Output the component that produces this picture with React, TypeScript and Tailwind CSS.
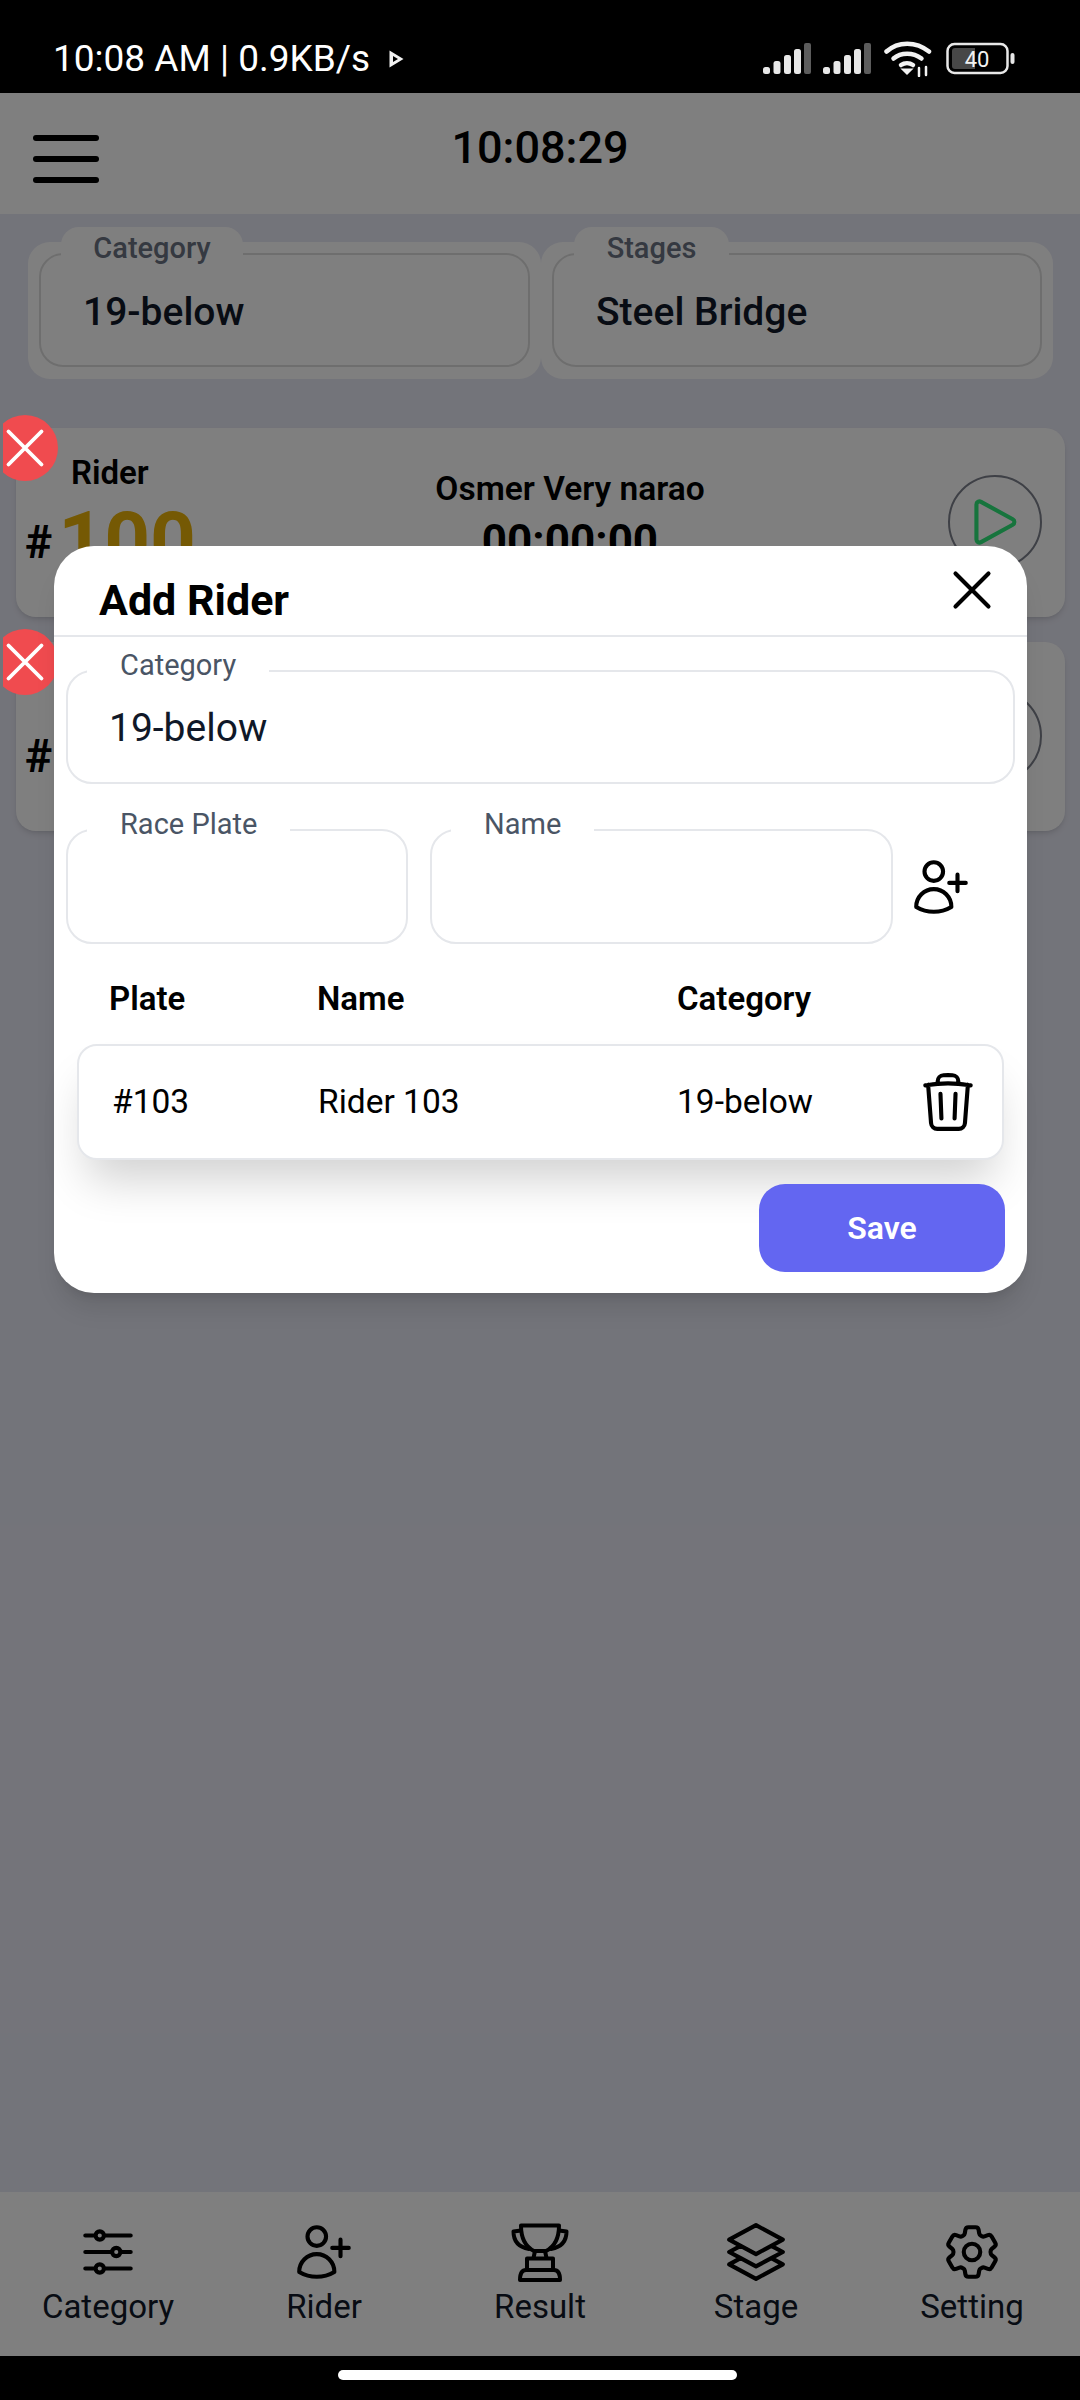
import { HiOutlineAdjustmentsHorizontal, HiOutlineUserPlus, HiOutlineSquare3Stack3D, HiOutlineCog6Tooth, HiOutlineTrash, HiOutlineXMark, HiOutlinePlay } from 'react-icons/hi2'

function Signal() {
  return (
    <svg width="48" height="32" viewBox="0 0 48 32">
      <rect x="0" y="24" width="7" height="7" rx="2.5" fill="#e8e8e8" />
      <rect x="10.5" y="18" width="7" height="13" rx="2.5" fill="#e8e8e8" />
      <rect x="21" y="12" width="7" height="19" rx="2.5" fill="#e8e8e8" />
      <rect x="31" y="6" width="7" height="25" rx="2.5" fill="#e8e8e8" />
      <rect x="41" y="0" width="7" height="31" rx="2" fill="#5c5c5c" />
    </svg>
  )
}

function StatusBar() {
  return (
    <div className="flex h-[93px] shrink-0 items-center bg-black pt-[24px] pl-[53px] text-white">
      <span className="text-[37px] leading-[44px] whitespace-nowrap">10:08 AM | 0.9KB/s</span>
      <svg className="ml-[18px]" width="17" height="20" viewBox="0 0 17 20">
        <path d="M1.5 1.5 L15.5 10 L1.5 18.5 Z M5 7 L5 13 L10 10 Z" fill="#f2f2f2" fillRule="evenodd" />
      </svg>
      <div className="ml-auto mr-[64px] flex items-center">
        <Signal />
        <div className="ml-[12px]"><Signal /></div>
        <svg className="ml-[13px]" width="48" height="36" viewBox="0 0 48 36" fill="none" stroke="#f2f2f2" strokeLinecap="round">
          <path d="M2.5 10.5 C14 0 32 0 45 10.5" strokeWidth="4.5" />
          <path d="M9.5 17.5 C17 11 29 11 37.5 17.5" strokeWidth="4.5" />
          <path d="M17 24 C20.5 21.5 25.5 21.5 29 24" strokeWidth="4.5" />
          <path d="M20 29 L23 32 L26 29 Z" strokeWidth="3" fill="#f2f2f2" />
          <path d="M35 35 V27 M42 26 V34" strokeWidth="2.5" />
        </svg>
        <svg className="ml-[14px]" width="70" height="34" viewBox="0 0 70 34">
          <rect x="1.5" y="2" width="60" height="29" rx="7" fill="none" stroke="#e8e8e8" strokeWidth="2.5" />
          <path d="M6 9 a3 3 0 0 1 3 -3 H29 V27 H9 a3 3 0 0 1 -3 -3 Z" fill="#474747" />
          <text x="31" y="24.5" textAnchor="middle" fontSize="22" fontFamily="Roboto, sans-serif" fill="#f2f2f2">40</text>
          <rect x="64.5" y="11" width="4" height="11" rx="2" fill="#e8e8e8" />
        </svg>
      </div>
    </div>
  )
}

function SelectCard({ label, value, tabWidth }: { label: string; value: string; tabWidth: string }) {
  return (
    <div className="relative h-[137px] rounded-[22px] bg-white pt-[11px] px-[11px] pb-[12px]">
      <div className={`absolute left-[33px] top-[-15px] h-[46px] ${tabWidth} rounded-t-[18px] bg-white text-center text-[29px] leading-[42px] font-medium text-gray-500`}>
        {label}
      </div>
      <div className="h-full rounded-[24px] border-2 border-[#dddddd] pl-[42px] pt-[35px] text-[39px] leading-[44px] font-medium text-gray-900">
        {value}
      </div>
    </div>
  )
}

function RiderCard({ top }: { top: string }) {
  return (
    <div className={`relative ml-[13px] flex h-[189px] items-start rounded-[20px] bg-white shadow-md ${top}`}>
      <div className="absolute left-[-24px] top-[-13px] z-20 flex h-[66px] w-[66px] items-center justify-center rounded-full bg-[#f04b4f] text-white">
        <HiOutlineXMark size={66} strokeWidth={1.4} className="shrink-0" />
      </div>
      <div className="w-[176px] shrink-0 pt-[25px] pl-[9px]">
        <div className="ml-[46px] text-[33px] leading-[40px] font-semibold text-black">Rider</div>
        <div className="mt-[8px] flex h-[80px] items-baseline">
          <span className="-translate-y-[10px] text-[46px] leading-none font-bold text-black">#</span>
          <span className="ml-[6px] text-[80px] leading-[80px] font-bold text-[#eab308]">100</span>
        </div>
      </div>
      <div className="flex-1 pt-[41px] text-center text-black">
        <div className="text-[33.5px] leading-[40px] font-semibold whitespace-nowrap">Osmer Very narao</div>
        <div className="mt-[7px] text-[44px] leading-[50px] font-bold">00:00:00</div>
      </div>
      <div className="mt-[47px] mr-[23px] flex h-[94px] w-[94px] shrink-0 items-center justify-center rounded-full border-2 border-[#7d808c] text-[#2ee87a]">
        <HiOutlinePlay size={66} className="shrink-0" />
      </div>
    </div>
  )
}

function Field({ label, value, className }: { label: string; value?: string; className: string }) {
  return (
    <div className={`relative rounded-[26px] border-2 border-gray-200 ${className}`}>
      <span className="absolute left-[19px] top-[-25px] bg-white px-[33px] text-[29px] leading-[36px] whitespace-nowrap text-gray-600">{label}</span>
      {value && <div className="pl-[41px] pt-[34px] text-[39px] leading-[44px] text-gray-900">{value}</div>}
    </div>
  )
}

function TrophyIcon() {
  return (
    <svg width="72" height="72" viewBox="0 0 72 72" fill="none" stroke="currentColor" strokeWidth="4" strokeLinejoin="round" strokeLinecap="round">
      <path d="M17 9.5 H55 C55 21 52 30 42 35 H30 C20 30 17 21 17 9.5 Z" />
      <path d="M17 14.5 L9.5 15.5 C9.5 24 14 31 25 33" />
      <path d="M55 14.5 L62.5 15.5 C62.5 24 58 31 47 33" />
      <path d="M31 35 L29.5 42 M41 35 L42.5 42" />
      <path d="M23 54 V42.5 H49 V54" />
      <path d="M16 64 C16 58 18 54 22 54 H50 C54 54 56 58 56 64 Z" />
    </svg>
  )
}

function Tab({ icon, label }: { icon: React.ReactNode; label: string }) {
  return (
    <div className="flex flex-col items-center pt-[24px]">
      <div className="flex h-[72px] w-[72px] items-center justify-center text-black">{icon}</div>
      <div className="text-[33px] leading-[38px] text-gray-900">{label}</div>
    </div>
  )
}

export default function App() {
  return (
    <div className="relative flex h-[2400px] w-[1080px] flex-col overflow-hidden bg-[#e7e8f4] font-[Roboto,sans-serif]">
      <StatusBar />

      {/* Top bar */}
      <header className="relative flex h-[121px] shrink-0 items-center justify-center bg-white">
        <div className="absolute left-[33px] top-[42px] flex w-[66px] flex-col gap-[15px]">
          <div className="h-[6px] rounded-full bg-black" />
          <div className="h-[6px] rounded-full bg-black" />
          <div className="h-[6px] rounded-full bg-black" />
        </div>
        <span className="-translate-y-[6px] text-[45px] leading-[52px] font-medium text-black">10:08:29</span>
      </header>

      {/* Selects */}
      <div className="grid shrink-0 grid-cols-[513px_512px] pl-[28px] pt-[28px]">
        <SelectCard label="Category" value="19-below" tabWidth="w-[182px]" />
        <SelectCard label="Stages" value="Steel Bridge" tabWidth="w-[155px]" />
      </div>

      {/* Riders */}
      <div className="ml-[3px] min-h-0 flex-1 overflow-hidden pt-[49px] pr-[15px]">
        <RiderCard top="" />
        <RiderCard top="mt-[25px]" />
      </div>

      {/* Bottom tabs */}
      <nav className="grid h-[164px] shrink-0 grid-cols-5 bg-white">
        <Tab icon={<HiOutlineAdjustmentsHorizontal size={66} className="shrink-0" />} label="Category" />
        <Tab icon={<HiOutlineUserPlus size={66} className="shrink-0" />} label="Rider" />
        <Tab icon={<TrophyIcon />} label="Result" />
        <Tab icon={<HiOutlineSquare3Stack3D size={66} className="shrink-0" />} label="Stage" />
        <Tab icon={<HiOutlineCog6Tooth size={66} className="shrink-0" />} label="Setting" />
      </nav>

      <div className="h-[44px] shrink-0" />

      {/* Dim layer */}
      <div className="absolute inset-x-0 top-[93px] bottom-[44px] z-10 bg-black/50" />

      {/* Android gesture bar */}
      <div className="absolute inset-x-0 bottom-0 z-20 flex h-[44px] justify-center bg-black pt-[14px]">
        <div className="h-[10px] w-[399px] -translate-x-[3px] rounded-full bg-white" />
      </div>

      {/* Add rider modal */}
      <div className="absolute left-[54px] top-[546px] z-30 w-[973px] rounded-[40px] bg-white shadow-xl">
        <div className="relative h-[91px] border-b-2 border-gray-200 pl-[45px] pt-[30px]">
          <span className="text-[43px] leading-[48px] font-bold text-black">Add Rider</span>
          <div className="absolute right-[22px] top-[11px] text-black">
            <HiOutlineXMark size={66} />
          </div>
        </div>
        <div className="px-[12px] pt-[33px]">
          <Field label="Category" value="19-below" className="h-[114px] w-[949px]" />
          <div className="mt-[45px] flex items-center">
            <Field label="Race Plate" className="h-[115px] w-[342px]" />
            <Field label="Name" className="ml-[22px] h-[115px] w-[463px]" />
            <div className="ml-[12px] flex h-[72px] w-[72px] items-center justify-center text-black">
              <HiOutlineUserPlus size={66} className="shrink-0" />
            </div>
          </div>
        </div>
        <div className="mt-[33px] grid grid-cols-[208px_360px_1fr] pl-[55px] text-[33px] leading-[44px] font-semibold text-black">
          <span>Plate</span>
          <span>Name</span>
          <span>Category</span>
        </div>
        <div className="mx-[23px] mt-[23px] flex h-[116px] w-[927px] items-center rounded-[20px] border-2 border-gray-200 bg-white pl-[33px] text-[33.5px] text-black shadow-[0_30px_45px_-10px_rgba(0,0,0,0.18)]">
          <span className="w-[206px]">#103</span>
          <span className="w-[359px]">Rider 103</span>
          <span>19-below</span>
          <div className="ml-auto mr-[21px] flex">
            <HiOutlineTrash size={66} />
          </div>
        </div>
        <div className="flex justify-end pt-[24px] pr-[22px] pb-[21px]">
          <button className="relative h-[88px] w-[246px] rounded-[26px] bg-[#6366f1] text-[32px] font-semibold text-white">Save</button>
        </div>
      </div>
    </div>
  )
}
